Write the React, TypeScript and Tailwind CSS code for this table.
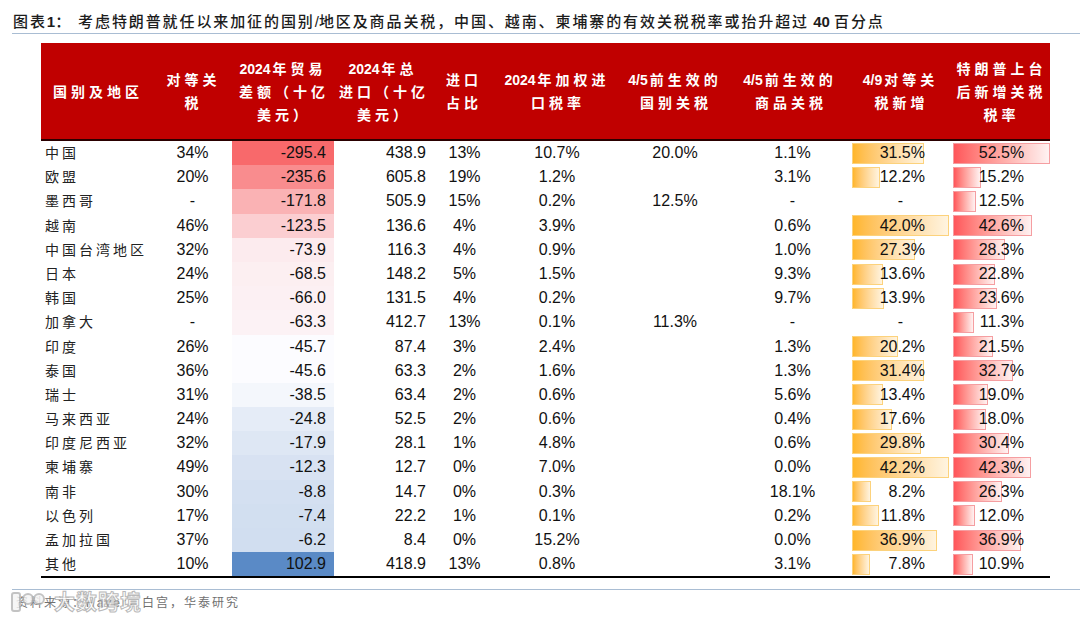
import React from "react";

interface Row {
  name: string;
  rec: string;
  diff: number;
  imp: string;
  share: string;
  weighted: string;
  country: string;
  product: string;
  recip: number | null;
  total: number;
}

const rows: Row[] = [
  { name: "中国", rec: "34%", diff: -295.4, imp: "438.9", share: "13%", weighted: "10.7%", country: "20.0%", product: "1.1%", recip: 31.5, total: 52.5 },
  { name: "欧盟", rec: "20%", diff: -235.6, imp: "605.8", share: "19%", weighted: "1.2%", country: "", product: "3.1%", recip: 12.2, total: 15.2 },
  { name: "墨西哥", rec: "-", diff: -171.8, imp: "505.9", share: "15%", weighted: "0.2%", country: "12.5%", product: "-", recip: null, total: 12.5 },
  { name: "越南", rec: "46%", diff: -123.5, imp: "136.6", share: "4%", weighted: "3.9%", country: "", product: "0.6%", recip: 42.0, total: 42.6 },
  { name: "中国台湾地区", rec: "32%", diff: -73.9, imp: "116.3", share: "4%", weighted: "0.9%", country: "", product: "1.0%", recip: 27.3, total: 28.3 },
  { name: "日本", rec: "24%", diff: -68.5, imp: "148.2", share: "5%", weighted: "1.5%", country: "", product: "9.3%", recip: 13.6, total: 22.8 },
  { name: "韩国", rec: "25%", diff: -66.0, imp: "131.5", share: "4%", weighted: "0.2%", country: "", product: "9.7%", recip: 13.9, total: 23.6 },
  { name: "加拿大", rec: "-", diff: -63.3, imp: "412.7", share: "13%", weighted: "0.1%", country: "11.3%", product: "-", recip: null, total: 11.3 },
  { name: "印度", rec: "26%", diff: -45.7, imp: "87.4", share: "3%", weighted: "2.4%", country: "", product: "1.3%", recip: 20.2, total: 21.5 },
  { name: "泰国", rec: "36%", diff: -45.6, imp: "63.3", share: "2%", weighted: "1.6%", country: "", product: "1.3%", recip: 31.4, total: 32.7 },
  { name: "瑞士", rec: "31%", diff: -38.5, imp: "63.4", share: "2%", weighted: "0.6%", country: "", product: "5.6%", recip: 13.4, total: 19.0 },
  { name: "马来西亚", rec: "24%", diff: -24.8, imp: "52.5", share: "2%", weighted: "0.6%", country: "", product: "0.4%", recip: 17.6, total: 18.0 },
  { name: "印度尼西亚", rec: "32%", diff: -17.9, imp: "28.1", share: "1%", weighted: "4.8%", country: "", product: "0.6%", recip: 29.8, total: 30.4 },
  { name: "柬埔寨", rec: "49%", diff: -12.3, imp: "12.7", share: "0%", weighted: "7.0%", country: "", product: "0.0%", recip: 42.2, total: 42.3 },
  { name: "南非", rec: "30%", diff: -8.8, imp: "14.7", share: "0%", weighted: "0.3%", country: "", product: "18.1%", recip: 8.2, total: 26.3 },
  { name: "以色列", rec: "17%", diff: -7.4, imp: "22.2", share: "1%", weighted: "0.1%", country: "", product: "0.2%", recip: 11.8, total: 12.0 },
  { name: "孟加拉国", rec: "37%", diff: -6.2, imp: "8.4", share: "0%", weighted: "15.2%", country: "", product: "0.0%", recip: 36.9, total: 36.9 },
  { name: "其他", rec: "10%", diff: 102.9, imp: "418.9", share: "13%", weighted: "0.8%", country: "", product: "3.1%", recip: 7.8, total: 10.9 },
];

const headers: string[][] = [
  ["国别及地区"],
  ["对等关", "税"],
  ["2024年贸易", "差额（十亿", "美元）"],
  ["2024年总", "进口（十亿", "美元）"],
  ["进口", "占比"],
  ["2024年加权进", "口税率"],
  ["4/5前生效的", "国别关税"],
  ["4/5前生效的", "商品关税"],
  ["4/9对等关", "税新增"],
  ["特朗普上台", "后新增关税", "税率"],
];

const cols = "grid grid-cols-[112px_79px_102px_98px_62px_126px_110px_120px_101px_99px]";

// excel style 3-colour scale: red -> white (median) -> blue
const RED = [248, 105, 107];
const WHITE = [252, 252, 255];
const BLUE = [90, 138, 198];
function heat(v: number) {
  const min = -295.4;
  const mid = -45.65;
  const max = 102.9;
  const mix = (a: number[], b: number[], t: number) =>
    a.map((x, i) => Math.round(x + (b[i] - x) * Math.min(1, Math.max(0, t))));
  const c = v <= mid ? mix(RED, WHITE, (v - min) / (mid - min)) : mix(WHITE, BLUE, (v - mid) / (max - mid));
  return `rgb(${c[0]}, ${c[1]}, ${c[2]})`;
}

// put tracking on the CJK runs only, digits stay tight
function Spaced({ text, cls }: { text: string; cls: string }) {
  const parts = text.split(/([\u3000-\u9fff\uff00-\uffef]+)/).filter(Boolean);
  return (
    <>
      {parts.map((p, i) =>
        /[\u3000-\u9fff\uff00-\uffef]/.test(p) ? (
          <span key={i} className={cls}>
            {p}
          </span>
        ) : (
          <span key={i} className="font-['Liberation_Sans',sans-serif]">
            {p}
          </span>
        )
      )}
    </>
  );
}

function BarCell({ value, scale, kind }: { value: number | null; scale: number; kind: "orange" | "red" }) {
  if (value === null) {
    return <div className="flex items-center justify-center">-</div>;
  }
  const barCls =
    kind === "orange"
      ? "bg-linear-to-r from-[#ffb628] to-[#fff4e0] border border-[#fcd27c]"
      : "bg-linear-to-r from-[#ff555a] to-[#fff2f2] border border-[#f59ea1]";
  return (
    <div className="grid h-full">
      <div className="col-start-1 row-start-1 flex items-center pl-[2px]">
        <div className={`h-[21px] ${barCls}`} style={{ width: value * scale }} />
      </div>
      <div className="col-start-1 row-start-1 flex items-center justify-end pr-[26px]">
        {value.toFixed(1)}%
      </div>
    </div>
  );
}

export default function App() {
  const cjk = "font-['Liberation_Sans','Noto_Sans_CJK_SC',sans-serif]";
  return (
    <div className={`relative w-[1080px] h-[618px] overflow-hidden bg-white text-[#111] ${cjk}`}>
      {/* title */}
      <div className="h-[33px] pl-[13px] pt-[12px] text-[15px] leading-[20px] font-medium text-[#1c1c1c] whitespace-nowrap">
        <span className="tracking-[1.9px]">图表</span>
        <span className="font-bold">1</span>
        <span className="tracking-[1.9px]">： 考虑特朗普就任以来加征的国别</span>
        <span>/</span>
        <span className="tracking-[1.9px]">地区及商品关税，中国、越南、柬埔寨的有效关税税率或抬升超过</span>
        <span className="font-bold"> 40 </span>
        <span className="tracking-[1.9px]">百分点</span>
      </div>
      <div className="ml-[12px] h-px bg-[#a9bdd3]" />

      {/* table */}
      <div className="ml-[41px] mt-[9px] w-[1009px]">
        <div className={`${cols} h-[98px] bg-[#c00000] border-b-2 border-[#2a0000] text-white font-bold text-[14px] leading-[23px]`}>
          {headers.map((lines, i) => (
            <div key={i} className="flex flex-col items-center justify-center pt-[2px]">
              {lines.map((l) => (
                <div key={l} className="whitespace-nowrap">
                  <Spaced text={l} cls="tracking-[4px] pl-[2px]" />
                </div>
              ))}
            </div>
          ))}
        </div>

        <div className="border-b-2 border-black text-[16px]">
          {rows.map((r) => (
            <div key={r.name} className={`${cols} h-[24.2px] leading-[24px]`}>
              <div className="pl-[4px] text-[14px] tracking-[3px] text-[#222]">{r.name}</div>
              <div className="text-center">{r.rec}</div>
              <div className="text-right pr-[8px]" style={{ backgroundColor: heat(r.diff) }}>
                {r.diff.toFixed(1)}
              </div>
              <div className="text-right pr-[6px]">{r.imp}</div>
              <div className="text-center pl-[3px]">{r.share}</div>
              <div className="text-center">{r.weighted}</div>
              <div className="text-center">{r.country}</div>
              <div className="text-center pl-[5px]">{r.product}</div>
              <BarCell value={r.recip} scale={2.3} kind="orange" />
              <BarCell value={r.total} scale={1.85} kind="red" />
            </div>
          ))}
        </div>
      </div>

      {/* source */}
      <div className="mt-[11px] ml-[12px] h-px bg-[#a9bdd3]" />
      <div className="pl-[16px] pt-[4px] text-[12px] leading-[18px] text-[#707070] tracking-[2px]">
        资料来源：Haver，白宫，华泰研究
      </div>

      {/* watermark */}
      <div className="absolute left-[10px] top-[589px] flex items-center gap-[4px] opacity-80">
        <svg width="40" height="26" viewBox="0 0 40 26">
          <g fill="none" stroke="#b5b5b5" strokeWidth="2">
            <rect x="2" y="4" width="8" height="18" rx="2" fill="#f4f4f4" />
            <circle cx="18" cy="10" r="5" fill="#f4f4f4" />
            <circle cx="29" cy="10" r="5" fill="#f4f4f4" />
          </g>
        </svg>
        <span className="text-[21px] font-bold leading-[26px] tracking-[1px] text-white [-webkit-text-stroke:1px_#a8a8a8]">
          大数跨境
        </span>
      </div>
    </div>
  );
}
